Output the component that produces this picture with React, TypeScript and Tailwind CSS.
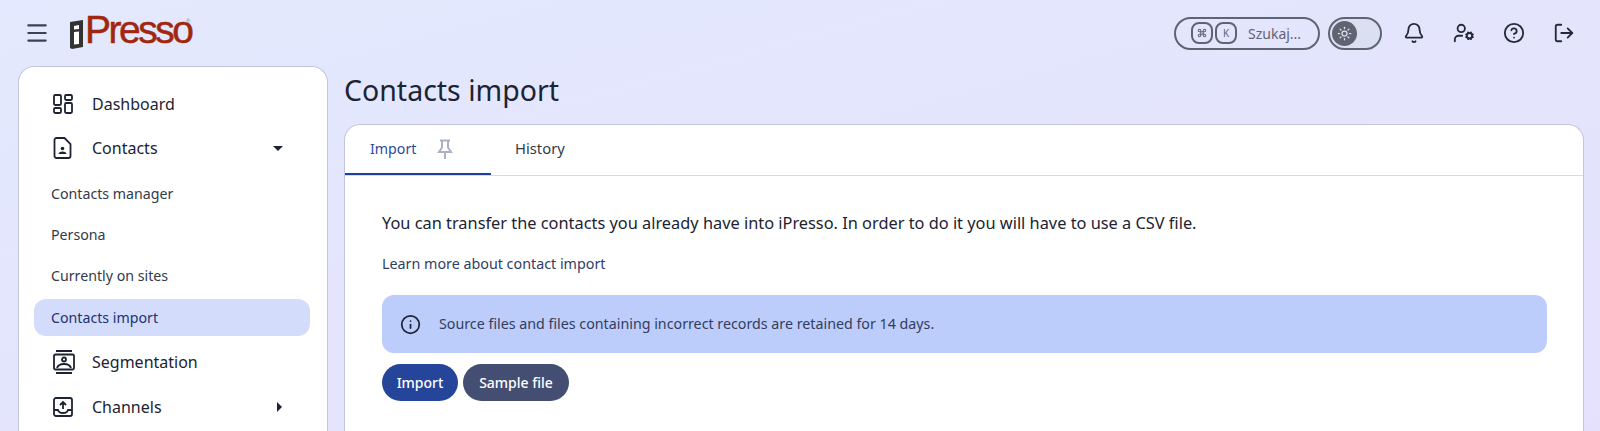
import { Menu, Bell, CircleHelp, LogOut, Info, Sun, Command, UserCog } from "lucide-react";

// Sidebar row with a big icon
function NavItem({ icon, label, arrow }: { icon: React.ReactNode; label: string; arrow?: "down" | "right" }) {
    return (
        <div className="flex h-[44.5px] items-center pl-[34px] pr-[44px] text-[16px] text-[#1c2333]">
            <span className="flex w-[39px]">{icon}</span>
            <span className="flex-1">{label}</span>
            {arrow === "down" && <span className="h-0 w-0 border-x-[5px] border-t-[5px] border-x-transparent border-t-[#1c2333]" />}
            {arrow === "right" && <span className="mr-[1px] h-0 w-0 border-y-[5px] border-l-[5px] border-y-transparent border-l-[#1c2333]" />}
        </div>
    );
}

function SubItem({ label, active }: { label: string; active?: boolean }) {
    return (
        <div className={`ml-[15px] mr-[17px] flex h-[37px] items-center rounded-[12px] px-[17px] text-[14.2px] ${active ? "bg-[#d3ddfb] text-[#1e3170]" : "text-[#333a4a]"}`}>
            {label}
        </div>
    );
}

function DashIcon() {
    return (
        <svg width="20" height="20" viewBox="0 0 20 20" fill="none" stroke="#1c2333" strokeWidth="1.8">
            <rect x="1" y="1" width="7" height="10" rx="1.2" />
            <rect x="12" y="1" width="7" height="5" rx="1.2" />
            <rect x="1" y="14" width="7" height="5" rx="1.2" />
            <rect x="12" y="9" width="7" height="10" rx="1.2" />
        </svg>
    );
}

function ContactIcon() {
    return (
        <svg width="20" height="22" viewBox="0 0 20 22" fill="none" stroke="#1c2333" strokeWidth="1.8">
            <path d="M3.500 1h8l6 6v12a2 2 0 0 1-2 2h-12a2 2 0 0 1-2-2V3a2 2 0 0 1 2-2z" />
            <circle cx="9.500" cy="11.500" r="1.800" fill="#1c2333" stroke="none" />
            <path d="M5.500 17c0-1.800 1.800-2.600 4-2.600s4 .8 4 2.600z" fill="#1c2333" stroke="none" />
        </svg>
    );
}

function SegmentIcon() {
    return (
        <svg width="22" height="24" viewBox="0 0 22 24" fill="none" stroke="#1c2333" strokeWidth="1.8">
            <path d="M3 1h16M3 23h16" />
            <rect x="1" y="4.500" width="20" height="15" rx="1.500" />
            <circle cx="11" cy="9.500" r="2" />
            <path d="M4 18c1-3 4-4 7-4s6 1 7 4" />
        </svg>
    );
}

function ChannelIcon() {
    return (
        <svg width="20" height="20" viewBox="0 0 20 20" fill="none" stroke="#1c2333" strokeWidth="1.8">
            <rect x="1" y="1" width="18" height="18" rx="2" />
            <path d="M10 12V5M7 8l3-3 3 3" />
            <path d="M1 13h4c.5 2 2.500 3 5 3s4.500-1 5-3h4" />
        </svg>
    );
}

function PinIcon() {
    return (
        <svg width="16" height="21" viewBox="0 0 16 21" fill="none" stroke="#aab2c5" strokeWidth="2" className="ml-[21px]">
            <path d="M3 1.500h10M5 1.500v7L2 13h12l-3-4.500v-7M8 13v7" />
        </svg>
    );
}

function Logo() {
    return (
        <div className="ml-[20px] flex h-[66px] self-start">
            <svg width="13" height="29" viewBox="0 0 13 29" className="mt-[20px]">
                <path d="M0 2l13-2v27l-11 2-2-1z" fill="#333333" />
                <path d="M4 6l5-1v4l-5 .6zM4 12l5-.6V24l-5 .6z" fill="#ffffff" />
            </svg>
            <div className="relative ml-[2px] mt-[10px] h-[40px] font-['Liberation_Sans',sans-serif] text-[39px] leading-[40px] tracking-[-2.5px] text-[#a1260f] [-webkit-text-stroke:0.5px_#a1260f]">
                Presso
                <span className="absolute top-[8px] right-[1px] text-[6px] leading-none tracking-normal text-[#888] [-webkit-text-stroke:0px]">®</span>
            </div>
        </div>
    );
}

function Header() {
    return (
        <div className="flex h-[66px] items-center pl-[24px] pr-[25px]">
            <Menu size={26} color="#3b4252" strokeWidth={2} />
            <Logo />
            <div className="flex-1" />
            <div className="flex h-[33px] w-[146px] items-center gap-[2px] rounded-full border-2 border-[#5f6472] pl-[15px] text-[14px] text-[#5f6472]">
                <span className="flex h-[22px] w-[22px] items-center justify-center rounded-[8px] border-2 border-[#5f6472]">
                    <Command size={10} strokeWidth={2.5} />
                </span>
                <span className="flex h-[22px] w-[22px] items-center justify-center rounded-[8px] border-2 border-[#5f6472] text-[10px]">K</span>
                <span className="ml-[9px]">Szukaj...</span>
            </div>
            <div className="ml-[8px] flex h-[33px] w-[54px] items-center rounded-full border-2 border-[#5f6472] bg-[#dbdff2] pl-[2px]">
                <span className="flex h-[25px] w-[25px] items-center justify-center rounded-full bg-[#5f6472]">
                    <Sun size={15} color="#dfe2f2" />
                </span>
            </div>
            <div className="ml-[21px] flex items-center gap-[28px] text-[#252a38]">
                <Bell size={22} strokeWidth={2} />
                <UserCog size={22} strokeWidth={2} />
                <CircleHelp size={22} strokeWidth={2} />
                <LogOut size={22} strokeWidth={2} />
            </div>
        </div>
    );
}

function App() {
    return (
        <div className="flex h-[431px] flex-col overflow-hidden bg-gradient-to-br from-[#e3e9fe] to-[#e5e1fc] font-['Noto_Sans',sans-serif]">
            <Header />
            <div className="flex flex-1 gap-[16px] pl-[18px] pr-[16px]">
                <div className="w-[310px] rounded-t-[16px] border border-b-0 border-[#c2c6dc] bg-white pt-[14.5px]">
                    <NavItem icon={<DashIcon />} label="Dashboard" />
                    <NavItem icon={<ContactIcon />} label="Contacts" arrow="down" />
                    <div className="flex flex-col gap-[4.3px] pb-[4px] pt-[4.5px]">
                        <SubItem label="Contacts manager" />
                        <SubItem label="Persona" />
                        <SubItem label="Currently on sites" />
                        <SubItem label="Contacts import" active />
                    </div>
                    <NavItem icon={<SegmentIcon />} label="Segmentation" />
                    <NavItem icon={<ChannelIcon />} label="Channels" arrow="right" />
                </div>
                <div className="flex flex-1 flex-col">
                    <h1 className="h-[58px] pt-[3px] text-[28.5px] leading-[42px] text-[#1c2333]">Contacts import</h1>
                    <div className="flex-1 rounded-t-[16px] border border-b-0 border-[#c2c6dc] bg-white">
                        <div className="flex h-[51px] border-b border-[#d5dbe6]">
                            <div className="flex w-[146px] items-center border-b-2 border-[#1d3f9f] pl-[25px] text-[14.2px] text-[#2a4a9e]">
                                Import
                                <PinIcon />
                            </div>
                            <div className="flex items-center pb-[3px] pl-[24px] text-[14.8px] text-[#333a4a]">History</div>
                        </div>
                        <div className="pl-[37px] pr-[36px] pt-[35px]">
                            <p className="text-[16.35px] leading-[24px] text-[#1c2333]">You can transfer the contacts you already have into iPresso. In order to do it you will have to use a CSV file.</p>
                            <p className="mt-[18px] text-[14.3px] leading-[22px] text-[#2f3d66]">Learn more about contact import</p>
                            <div className="mt-[20px] flex h-[58px] items-center rounded-[12px] bg-[#bccdfc] pl-[18px] text-[14.26px] text-[#333c5c]">
                                <Info size={21} color="#1c2333" />
                                <span className="ml-[18px]">Source files and files containing incorrect records are retained for 14 days.</span>
                            </div>
                            <div className="mt-[11px] flex gap-[5px] text-[14px] font-medium text-white">
                                <button className="h-[37px] w-[76px] rounded-full bg-[#25459a]">Import</button>
                                <button className="h-[37px] w-[106px] rounded-full bg-[#434e72]">Sample file</button>
                            </div>
                        </div>
                    </div>
                </div>
            </div>
        </div>
    );
}

export default App;
